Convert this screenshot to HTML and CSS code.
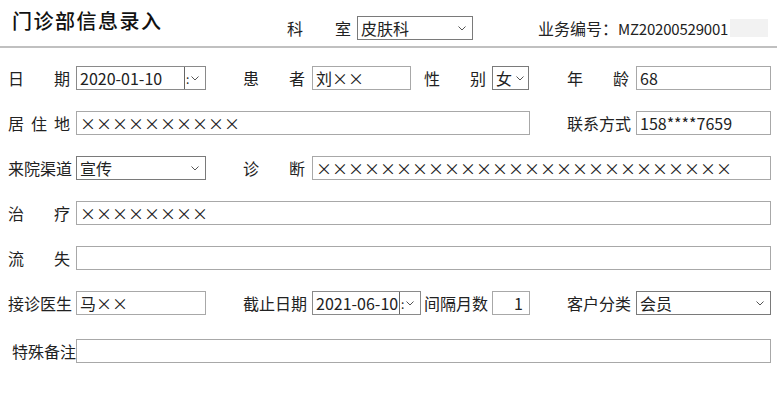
FILE: index.html
```html
<!DOCTYPE html>
<html lang="zh-CN">

<head>
    <meta charset="UTF-8">
    <meta name="viewport" content="width=device-width, initial-scale=1.0">
    <title>门诊部信息录入</title>
    <link rel="stylesheet" href="styles.css">
</head>

<body>
    <header class="top">
        <h1 class="title">门诊部信息录入</h1>
        <div class="dept">
            <span class="lab">科室</span>
            <div class="select dept-select">
                <span>皮肤科</span>
                <svg class="chev" width="8" height="5" viewBox="0 0 8 5"><polyline points="0.5,0.5 4,4 7.5,0.5" /></svg>
            </div>
        </div>
        <div class="code">
            <span>业务编号：</span>
            <span class="code-no">MZ20200529001</span>
            <span class="code-pad"></span>
        </div>
    </header>

    <form class="grid" id="clinicForm">
        <!-- 第一行 -->
        <div class="cell"><span class="lab">日期</span></div>
        <div class="date">
            <span class="date-text">2020-01-10</span>
            <span class="date-btn">:<svg class="chev" width="8" height="5" viewBox="0 0 8 5"><polyline points="0.5,0.5 4,4 7.5,0.5" /></svg></span>
        </div>
        <div class="cell pad"><span class="lab">患者</span></div>
        <div><input type="text" class="w99" value="刘××"></div>
        <div class="cell"><span class="lab">性别</span></div>
        <div class="select sex">
            <span>女</span>
            <svg class="chev" width="8" height="5" viewBox="0 0 8 5"><polyline points="0.5,0.5 4,4 7.5,0.5" /></svg>
        </div>
        <div class="cell pad"><span class="lab">年龄</span></div>
        <input type="text" value="68">

        <!-- 第二行 -->
        <div class="cell"><span class="lab">居住地</span></div>
        <input type="text" class="span5" value="××××××××××">
        <div class="cell pad"><span class="lab">联系方式</span></div>
        <input type="text" value="158****7659">

        <!-- 第三行 -->
        <div class="cell"><span class="lab">来院渠道</span></div>
        <div class="select">
            <span>宣传</span>
            <svg class="chev" width="8" height="5" viewBox="0 0 8 5"><polyline points="0.5,0.5 4,4 7.5,0.5" /></svg>
        </div>
        <div class="cell pad"><span class="lab">诊断</span></div>
        <input type="text" class="span5" value="××××××××××××××××××××××××××">

        <!-- 第四、五行 -->
        <div class="cell"><span class="lab">治疗</span></div>
        <input type="text" class="span7" value="××××××××">

        <div class="cell"><span class="lab">流失</span></div>
        <input type="text" class="span7" value="">

        <!-- 第六行 -->
        <div class="cell"><span class="lab">接诊医生</span></div>
        <input type="text" value="马××">
        <div class="cell pad"><span class="lab">截止日期</span></div>
        <div class="date w109">
            <span class="date-text">2021-06-10</span>
            <span class="date-btn">:<svg class="chev" width="8" height="5" viewBox="0 0 8 5"><polyline points="0.5,0.5 4,4 7.5,0.5" /></svg></span>
        </div>
        <div class="cell"><span class="lab">间隔月数</span></div>
        <input type="text" class="num" value="1">
        <div class="cell pad"><span class="lab">客户分类</span></div>
        <div class="select">
            <span>会员</span>
            <svg class="chev" width="8" height="5" viewBox="0 0 8 5"><polyline points="0.5,0.5 4,4 7.5,0.5" /></svg>
        </div>

        <!-- 第七行 -->
        <div class="cell last"><span class="lab shift">特殊备注</span></div>
        <input type="text" class="span7 last" value="">
    </form>
</body>

</html>
```

FILE: styles.css
```css
body {
    margin: 0;
    background: #ffffff;
    color: #222222;
    font-family: "Noto Sans CJK SC", "Liberation Sans", sans-serif;
    font-size: 16px;
}

.top {
    display: flex;
    align-items: flex-start;
    height: 46px;
    border-bottom: 2px solid #c0c0c0;
}

.title {
    width: 275px;
    margin: 8px 0 0 12px;
    font-size: 20px;
    font-weight: 500;
    letter-spacing: 1.5px;
    line-height: 26px;
    color: #111111;
}

.dept {
    display: flex;
    gap: 6px;
    margin-top: 16px;
}

.dept .lab {
    width: 64px;
    line-height: 24px;
}

.dept-select {
    width: 116px;
}

.code {
    display: flex;
    align-items: center;
    margin: 18px 0 0 65px;
    height: 20px;
}

.code-no {
    width: 112px;
    font-size: 15px;
    letter-spacing: -0.2px;
}

.code-pad {
    width: 38px;
    height: 18px;
    background: #f2f2f2;
}

.grid {
    display: grid;
    grid-template-columns: 68px 130px 106px 112px 68px 38px 106px 135px;
    grid-template-rows: repeat(6, 24px) 27px;
    row-gap: 21px;
    padding: 18px 0 0 8px;
    margin: 0;
}

.cell {
    display: flex;
    align-items: center;
}

.cell.pad {
    padding-left: 37px;
}

.lab {
    display: block;
    width: 62px;
    white-space: nowrap;
    text-align-last: justify;
    line-height: 24px;
}

.lab.shift {
    margin-left: 4px;
}

.cell.last,
input.last {
    align-self: end;
}

input {
    box-sizing: border-box;
    height: 24px;
    width: 100%;
    margin: 0;
    padding: 0 3px;
    border: 1px solid #a8a8a8;
    font-family: inherit;
    font-size: 16px;
    color: #222222;
    background: #ffffff;
    outline: none;
}

.w99 {
    width: 99px;
}

.num {
    text-align: right;
    padding-right: 6px;
}

.span5 {
    grid-column: span 5;
    width: auto;
}

.span7 {
    grid-column: span 7;
}

.select {
    box-sizing: border-box;
    display: flex;
    align-items: center;
    justify-content: space-between;
    height: 24px;
    padding: 0 6px 0 3px;
    border: 1px solid #7a7a7a;
    background: #ffffff;
}

.sex {
    width: 37px;
    padding-right: 4px;
}

.chev {
    fill: none;
    stroke: #555555;
    stroke-width: 1;
}

.date {
    box-sizing: border-box;
    display: flex;
    height: 24px;
    border: 1px solid #8a8a8a;
}

.w109 {
    width: 109px;
}

.date-text {
    flex: 1;
    padding-left: 3px;
    line-height: 22px;
    white-space: nowrap;
    overflow: hidden;
}

.date-btn {
    display: flex;
    align-items: center;
    gap: 2px;
    width: 21px;
    border-left: 1px solid #666666;
    font-size: 12px;
    padding-left: 1px;
    box-sizing: border-box;
}
```
